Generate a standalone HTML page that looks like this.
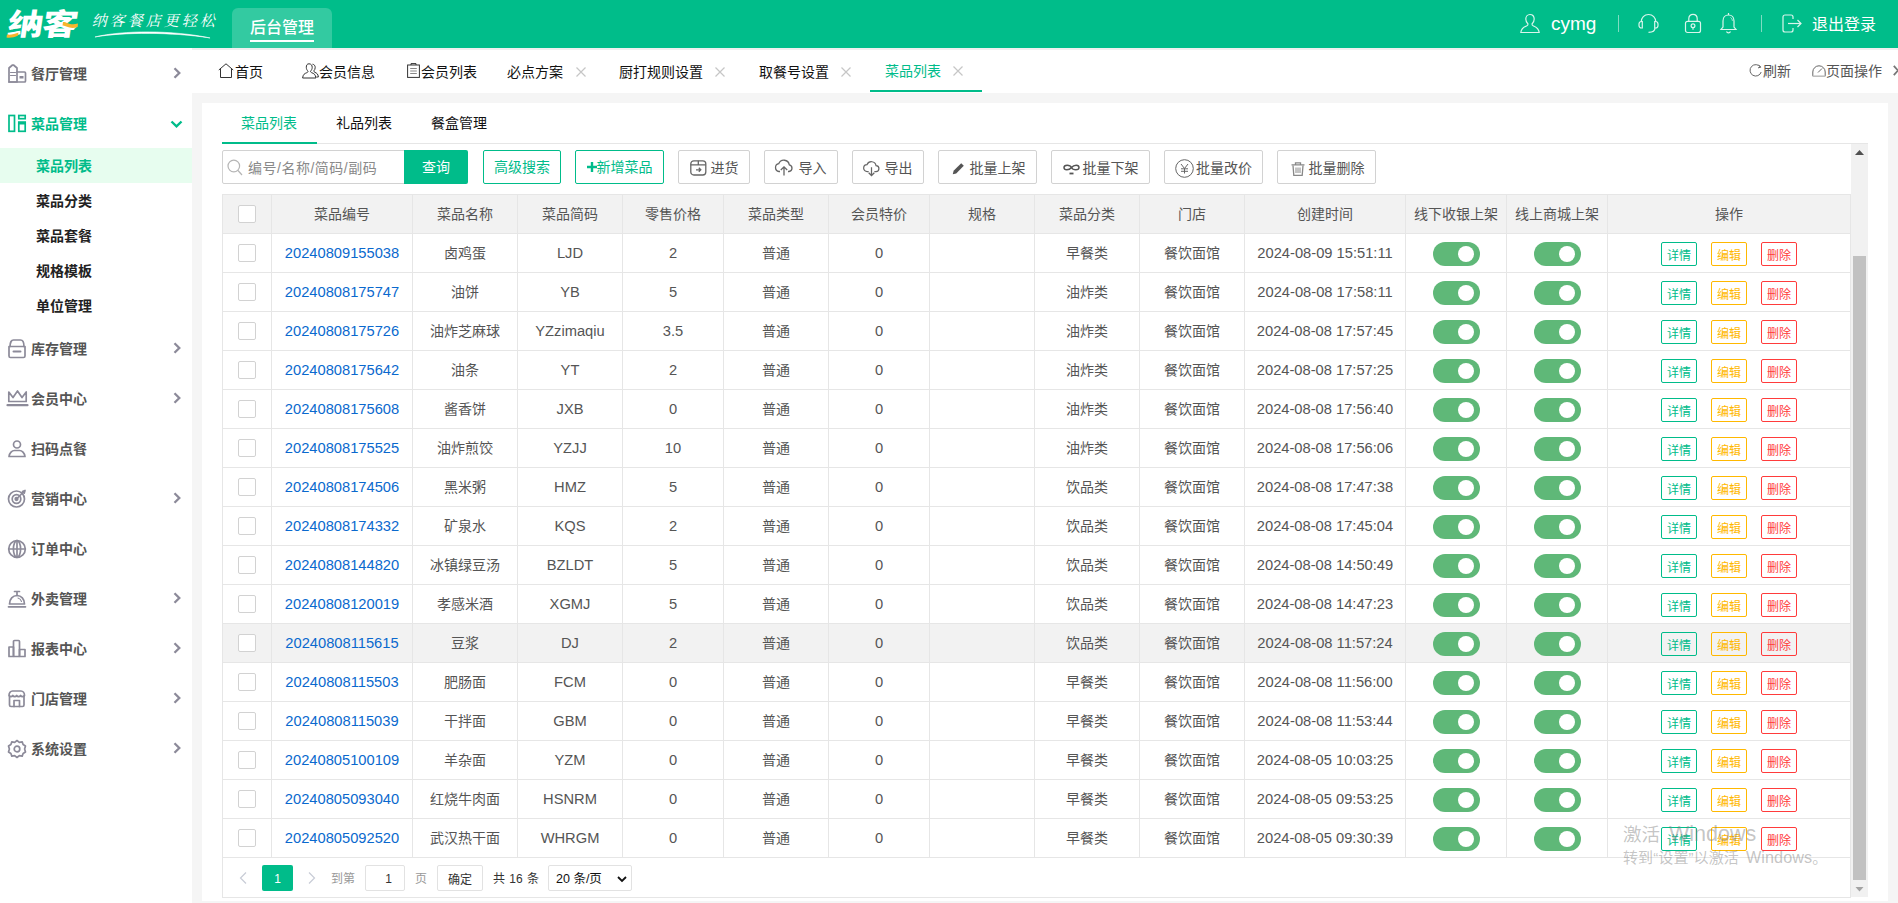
<!DOCTYPE html>
<html lang="zh-CN"><head><meta charset="utf-8"><title>菜品列表</title>
<style>
*{box-sizing:border-box;margin:0;padding:0}
html,body{width:1898px;height:903px;overflow:hidden;background:#f5f5f5}
body{font-family:"Liberation Sans","Noto Sans CJK SC",sans-serif;font-size:14px;color:#555;position:relative}
a{text-decoration:none;color:inherit}
i{font-style:normal}
.abs{position:absolute}
svg{display:block;overflow:visible}
/* header */
#hd{position:absolute;left:0;top:0;width:1898px;height:48px;background:#00bd8a;color:#fff}
#logo{position:absolute;left:8px;top:7px;font-size:30px;line-height:36px;font-weight:900;letter-spacing:-1px;transform-origin:0 50%;transform:scale(1.19,1) skewX(-7deg);color:#fff;white-space:nowrap}
#slogan{position:absolute;left:93px;top:10px;font-size:15px;line-height:22px;letter-spacing:3px;font-family:"Liberation Serif","Noto Serif CJK SC",serif;font-weight:400;transform:skewX(-14deg);white-space:nowrap}
#navtab{position:absolute;left:232px;top:8px;width:100px;height:40px;background:#33caa1;border-radius:6px 6px 0 0;font-size:16px;line-height:22px;text-align:center;padding-top:9px;letter-spacing:0}
#navtab b{font-weight:500;display:inline-block;border-bottom:2px solid #fff;padding-bottom:1px}
.hsep{position:absolute;top:15px;width:1px;height:17px;background:#7fdcc2}
.htxt{position:absolute;top:11px;line-height:24px;font-size:16px;white-space:nowrap}
/* sidebar */
#sb{position:absolute;left:0;top:48px;width:192px;height:855px;background:#fff}
.mi{position:absolute;left:0;width:192px;height:50px;line-height:52px;font-weight:700;color:#555;padding-left:31px}
.mi svg{position:absolute;left:8px;top:16px}
.mi .ar{position:absolute;left:173px;top:19px}
.mi.on{color:#00bc8a}
.smi{position:absolute;left:0;width:192px;height:35px;line-height:37px;font-weight:700;color:#222;padding-left:36px}
.smi.on{background:#e7fdef;color:#00bc8a}
/* tabs */
#tb{position:absolute;left:192px;top:48px;width:1706px;height:45px;background:#fff}
.tab{position:absolute;top:0;height:45px;line-height:48px;color:#111;white-space:nowrap}
.tab.on{color:#00bc8a}
.tab svg{position:absolute}
.x{position:absolute;top:18.500px;width:10px;height:10px}
/* panel */
#pn{position:absolute;left:202px;top:103px;width:1686px;height:798px;background:#fff}
.stab{position:absolute;top:103px;height:40px;line-height:40px;color:#111;white-space:nowrap}
.btn{position:absolute;top:150px;height:34px;line-height:34px;border:1px solid #d2d2d2;border-radius:2px;background:#fff;color:#555;white-space:nowrap;text-align:center}
.btn svg{position:absolute}
.btn.g{border-color:#00bc8a;color:#00bc8a;line-height:32px}
/* table */
table.grid{position:absolute;left:222px;top:194px;width:1628px;border-collapse:collapse;table-layout:fixed}
.grid th,.grid td{border:1px solid #e6e6e6;height:39px;text-align:center;font-weight:400;color:#555;padding:0;white-space:nowrap;line-height:20px}
.grid th{background:#f2f2f2;height:39px}
.grid tr.hov td{background:#f2f2f2}
.lnk{color:#0a69ce;font-size:14.7px}
.en{font-size:14.7px}
.cb{display:inline-block;width:18px;height:18px;border:1px solid #d2d2d2;border-radius:2px;background:#fff;vertical-align:middle;position:relative;top:-1px}
.sw{display:inline-block;margin-left:1px;width:47px;height:24px;border-radius:12px;background:#5fb878;position:relative;vertical-align:middle;top:1px}
.sw:after{content:"";position:absolute;left:25px;top:4px;width:16px;height:16px;border-radius:8px;background:#fff}
.ops a{display:inline-block;width:36px;height:24px;line-height:27px;border:1px solid;border-radius:2px;font-size:12px;margin:0 7px;vertical-align:middle;position:relative;top:1px}
.b1{color:#00bc8a;border-color:#00bc8a}
.b2{color:#ffb800;border-color:#ffb800}
.b3{color:#ff3b3b;border-color:#ff3b3b}

</style></head><body>
<div id="hd">
<div id="logo">纳客</div>
<svg class="abs" style="left:6px;top:8px" width="74" height="32" viewBox="0 0 74 32"><path d="M1 26.500C5 27 9 26 12.500 24.500L12 27.500C8.500 29.500 4 30 .5 29.500Z" fill="#f7b52c"/><path d="M57 14c3.500-.5 6.500 4 15 1.500l-.5 3.500c-8 3-11.500-2-15-1.500z" fill="#f7b52c"/></svg>
<div id="slogan">纳客餐店更轻松</div>
<svg class="abs" style="left:94px;top:31px" width="118" height="8" viewBox="0 0 120 8"><path d="M1 6 C30 -1 80 -1 118 7 C80 1 30 1 1 6 Z" fill="#fff" stroke="#fff" stroke-width=".6"/></svg>
<div id="navtab"><b>后台管理</b></div>
<svg class="abs" style="left:1520px;top:13px" width="20" height="21" viewBox="0 0 20 21" fill="none" stroke="#d9f5ec" stroke-width="1.2"><path d="M10 1.5c2.6 0 4.2 2 4.2 4.6 0 2-.9 3.800-2.200 4.800 0 1 .3 1.600 1.500 2.100 2.700 1.100 5.200 2.200 5.700 6.500H.8C1.300 15.200 3.800 14.100 6.500 13c1.200-.5 1.500-1.100 1.500-2.100C6.700 9.900 5.800 8.100 5.800 6.100 5.800 3.500 7.400 1.500 10 1.500z"/></svg>
<div class="htxt" style="left:1551px;top:11.5px;font-size:19px">cymg</div>
<div class="hsep" style="left:1618px"></div>
<svg class="abs" style="left:1638px;top:13px" width="21" height="21" viewBox="0 0 21 21" fill="none" stroke="#d9f5ec" stroke-width="1.200"><path d="M3.200 9C3.200 4.600 6.300 1.500 10.500 1.500S17.800 4.600 17.800 9"/><path d="M3.500 8.500h.8v6.500h-.8C2.100 15 1 13.900 1 12.500v-1.500C1 9.600 2.100 8.500 3.500 8.500z"/><path d="M17.500 8.500h-.8v6.500h.8c1.400 0 2.500-1.100 2.500-2.500v-1.500c0-1.400-1.100-2.500-2.500-2.500z"/><path d="M17 15c0 2.700-2.800 4.300-6.500 4.300"/></svg>
<svg class="abs" style="left:1684px;top:13px" width="18" height="21" viewBox="0 0 18 21" fill="none" stroke="#d9f5ec" stroke-width="1.200"><rect x="1.500" y="8.300" width="15" height="11.200" rx="2"/><path d="M4.800 8.300V5.500C4.800 3 6.500 1.300 9 1.300s4.200 1.700 4.200 4.200v2.800"/><circle cx="9" cy="12.800" r="1.900"/><path d="M9 14.700v2"/></svg>
<svg class="abs" style="left:1720px;top:12px" width="17" height="22" viewBox="0 0 17 22" fill="none" stroke="#d9f5ec" stroke-width="1.200"><path d="M8.500 3c3.400 0 5.500 2.600 5.500 6v6l2 2.500H1L3 15V9c0-3.400 2.100-6 5.500-6z"/><path d="M8.500 3V1"/><path d="M6.500 19.500c.4.900 1.100 1.300 2 1.300s1.600-.4 2-1.300"/><path d="M10.500 5.500c1.200.7 1.800 1.900 1.900 3.300" stroke-width=".8"/></svg>
<div class="hsep" style="left:1761px"></div>
<svg class="abs" style="left:1782px;top:14px" width="20" height="19" viewBox="0 0 20 19" fill="none" stroke="#d9f5ec" stroke-width="1.200"><path d="M11 5V3c0-1.100-.9-2-2-2H3C1.900 1 1 1.900 1 3v13c0 1.100.9 2 2 2h6c1.100 0 2-.9 2-2v-2"/><path d="M6 9.500h13"/><path d="M15.500 6l3.500 3.500-3.500 3.500"/></svg>
<div class="htxt" style="left:1812px;top:12.5px">退出登录</div>
</div>
<div id="sb">
<div class="mi" style="top:0px"><svg width="19" height="19" viewBox="0 0 19 19" fill="none" stroke="#8c8a99" stroke-width="1.700" stroke-linejoin="round" stroke-linecap="round"><path d="M1 18V4L4.500 1h1L9 4V18z"/><path d="M9 8h7.500c.6 0 1 .4 1 1V17c0 .6-.4 1-1 1H1"/><path d="M2.500 8.500h5M2.500 11.500h5" stroke-width="1.100"/><rect x="11.500" y="12" width="4" height="2.500" fill="#8c8a99" stroke="none"/></svg>餐厅管理<svg class="ar" width="8" height="12" viewBox="0 0 8 12" fill="none" stroke="#8c8a99" stroke-width="2.300"><path d="M1.500 1.200L6.300 6l-4.800 4.800"/></svg></div>
<div class="mi on" style="top:50px"><svg width="19" height="19" viewBox="0 0 19 19" fill="none" stroke="#00bc8a" stroke-width="1.700"><rect x="1" y="1.500" width="5.500" height="15.800"/><rect x="10.800" y="1.500" width="6.400" height="3.200"/><rect x="10.800" y="8.300" width="6.400" height="9"/><rect x="10" y="7.500" width="8" height="3" fill="#00bc8a" stroke="none"/></svg>菜品管理<svg class="ar" style="left:170px;top:22px" width="13" height="8" viewBox="0 0 13 8" fill="none" stroke="#00bc8a" stroke-width="2.400"><path d="M1.500 1.500L6.500 6.300l5-4.800"/></svg></div>
<div class="mi" style="top:275px"><svg width="19" height="19" viewBox="0 0 19 19" fill="none" stroke="#8c8a99" stroke-width="1.700" stroke-linejoin="round" stroke-linecap="round"><path d="M2 7.500C2 3.500 3.500 1 5.500 1h7C14.500 1 16 3.500 16 7.500"/><path d="M1 7.500h16v9.500c0 .8-.7 1.500-1.500 1.500h-13C1.700 18.500 1 17.800 1 17z"/><path d="M5.500 12.500h7" stroke-width="2"/></svg>库存管理<svg class="ar" width="8" height="12" viewBox="0 0 8 12" fill="none" stroke="#8c8a99" stroke-width="2.300"><path d="M1.500 1.200L6.300 6l-4.800 4.800"/></svg></div>
<div class="mi" style="top:325px"><svg width="19" height="19" viewBox="0 0 19 19" fill="none" stroke="#8c8a99" stroke-width="1.700" stroke-linejoin="round" stroke-linecap="round"><path d="M.8 12.500V3l4.200 5.500L9.500 2l4.500 6.500L18.200 3v9.500z"/><path d="M-.5 16.200h20" stroke-width="2.200"/></svg>会员中心<svg class="ar" width="8" height="12" viewBox="0 0 8 12" fill="none" stroke="#8c8a99" stroke-width="2.300"><path d="M1.500 1.200L6.300 6l-4.800 4.800"/></svg></div>
<div class="mi" style="top:375px"><svg width="19" height="19" viewBox="0 0 19 19" fill="none" stroke="#8c8a99" stroke-width="1.700" stroke-linejoin="round" stroke-linecap="round"><circle cx="9" cy="5.500" r="3.500"/><path d="M1 17.500c.5-3.500 3-6 5.500-6h5c2.500 0 5 2.500 5.500 6z"/></svg>扫码点餐</div>
<div class="mi" style="top:425px"><svg width="19" height="19" viewBox="0 0 19 19" fill="none" stroke="#8c8a99" stroke-width="1.700" stroke-linejoin="round" stroke-linecap="round"><circle cx="8.500" cy="10" r="8"/><circle cx="8.500" cy="10" r="4.300"/><circle cx="8.500" cy="10" r="1.300" fill="#8c8a99"/><path d="M8.500 10L16.500 2M14.500 2.500l2.500-1-.8 2.700"/></svg>营销中心<svg class="ar" width="8" height="12" viewBox="0 0 8 12" fill="none" stroke="#8c8a99" stroke-width="2.300"><path d="M1.500 1.200L6.300 6l-4.800 4.800"/></svg></div>
<div class="mi" style="top:475px"><svg width="19" height="19" viewBox="0 0 19 19" fill="none" stroke="#8c8a99" stroke-width="1.700" stroke-linejoin="round" stroke-linecap="round"><circle cx="9" cy="10" r="8.300"/><ellipse cx="9" cy="10" rx="3.600" ry="8.300"/><path d="M.7 10h16.600M9 1.700v16.600"/></svg>订单中心</div>
<div class="mi" style="top:525px"><svg width="19" height="19" viewBox="0 0 19 19" fill="none" stroke="#8c8a99" stroke-width="1.700" stroke-linejoin="round" stroke-linecap="round"><path d="M1.500 15c0-5 3.300-8.500 7.500-8.500s7.500 3.500 7.500 8.500z"/><path d="M.5 17.800h17"/><path d="M6.500 2.500h5M9 2.500v4"/><path d="M10 9c1.800.5 3 1.800 3.500 3.500" stroke-width="1.100"/></svg>外卖管理<svg class="ar" width="8" height="12" viewBox="0 0 8 12" fill="none" stroke="#8c8a99" stroke-width="2.300"><path d="M1.500 1.200L6.300 6l-4.800 4.800"/></svg></div>
<div class="mi" style="top:575px"><svg width="19" height="19" viewBox="0 0 19 19" fill="none" stroke="#8c8a99" stroke-width="1.700" stroke-linejoin="round" stroke-linecap="round"><rect x="1" y="8" width="4.500" height="9.500"/><rect x="5.500" y="1.500" width="6" height="16" rx="1"/><rect x="11.500" y="10.500" width="5.500" height="7"/></svg>报表中心<svg class="ar" width="8" height="12" viewBox="0 0 8 12" fill="none" stroke="#8c8a99" stroke-width="2.300"><path d="M1.500 1.200L6.300 6l-4.800 4.800"/></svg></div>
<div class="mi" style="top:625px"><svg width="19" height="19" viewBox="0 0 19 19" fill="none" stroke="#8c8a99" stroke-width="1.700" stroke-linejoin="round" stroke-linecap="round"><path d="M1.500 7v9c0 .8.700 1.500 1.500 1.500h11.500c.8 0 1.500-.7 1.500-1.500V7"/><path d="M1 6.500C1 4 2.500 2 4.500 2h8.500c2 0 3.500 2 3.500 4.500-1 1.600-3 1.600-3.900 0-.9 1.600-3 1.600-3.900 0-.9 1.600-3 1.600-3.900 0-.9 1.600-2.800 1.600-3.800 0z"/><path d="M6 17.500v-6h5.500v6"/></svg>门店管理<svg class="ar" width="8" height="12" viewBox="0 0 8 12" fill="none" stroke="#8c8a99" stroke-width="2.300"><path d="M1.500 1.200L6.300 6l-4.800 4.800"/></svg></div>
<div class="mi" style="top:675px"><svg width="19" height="19" viewBox="0 0 19 19" fill="none" stroke="#8c8a99" stroke-width="1.700" stroke-linejoin="round" stroke-linecap="round"><path d="M9 1l2.300 1.800 2.900-.4.900 2.600 2.400 1.500-.9 3 .9 3-2.400 1.500-.9 2.600-2.900-.4L9 18l-2.300-1.800-2.900.4-.9-2.600L.5 12.500l.9-3-.9-3 2.400-1.500.9-2.600 2.900.4z" transform="translate(0 .5)"/><circle cx="9" cy="10" r="2.800"/></svg>系统设置<svg class="ar" width="8" height="12" viewBox="0 0 8 12" fill="none" stroke="#8c8a99" stroke-width="2.300"><path d="M1.500 1.200L6.300 6l-4.800 4.800"/></svg></div>
<div class="smi on" style="top:100px">菜品列表</div>
<div class="smi" style="top:135px">菜品分类</div>
<div class="smi" style="top:170px">菜品套餐</div>
<div class="smi" style="top:205px">规格模板</div>
<div class="smi" style="top:240px">单位管理</div>
</div>
<div id="tb">
<div class="abs" style="left:0;top:0;width:1706px;height:2px;background:#f0f0f0"></div>
<svg class="abs" style="left:26px;top:15px" width="16" height="15" viewBox="0 0 16 15" fill="none" stroke="#333" stroke-width="1"><path d="M.8 7L8 .8 15.200 7"/><path d="M2.500 5.800V14.500h11V5.800"/></svg>
<div class="tab" style="left:43px">首页</div>
<svg class="abs" style="left:110px;top:15px" width="17" height="16" viewBox="0 0 17 16" fill="none" stroke="#333" stroke-width="1"><path d="M7 .8c2 0 3.200 1.500 3.200 3.500 0 1.600-.7 3-1.700 3.800 0 .8.200 1.200 1.200 1.600 2.100.8 3.800 1.600 4.200 5.300H.600c.4-3.700 2.100-4.500 4.200-5.300 1-.4 1.200-.8 1.200-1.600-1-.8-1.700-2.200-1.700-3.800C4.300 2.300 5 .8 7 .8z"/><path d="M10.500 1.200c1.800.2 2.700 1.600 2.700 3.300 0 1.400-.6 2.600-1.400 3.400 0 .7.300 1 1.100 1.400 1.800.8 3.200 1.700 3.500 4.700h-2"/></svg>
<div class="tab" style="left:127px">会员信息</div>
<svg class="abs" style="left:215px;top:15px" width="13" height="15" viewBox="0 0 13 15" fill="none" stroke="#333" stroke-width="1"><rect x=".6" y="2" width="11.800" height="12.400"/><path d="M4 2V.6h5V2" /><path d="M3.200 5.500h6.600M3.200 8h6.600M3.200 10.500h6.600" stroke="#888"/></svg>
<div class="tab" style="left:229px">会员列表</div>
<div class="tab" style="left:315px">必点方案</div>
<svg class="x" style="left:384px" viewBox="0 0 10 10" stroke="#c6c6c6" stroke-width="1.200"><path d="M.5.500l9 9M9.500.500l-9 9"/></svg>
<div class="tab" style="left:427px">厨打规则设置</div>
<svg class="x" style="left:523px" viewBox="0 0 10 10" stroke="#c6c6c6" stroke-width="1.200"><path d="M.5.500l9 9M9.500.500l-9 9"/></svg>
<div class="tab" style="left:567px">取餐号设置</div>
<svg class="x" style="left:649px" viewBox="0 0 10 10" stroke="#c6c6c6" stroke-width="1.200"><path d="M.5.500l9 9M9.500.500l-9 9"/></svg>
<div class="tab on" style="left:693px;top:-1px">菜品列表</div>
<svg class="x" style="left:761px;top:17.500px" viewBox="0 0 10 10" stroke="#c6c6c6" stroke-width="1.200"><path d="M.5.500l9 9M9.500.500l-9 9"/></svg>
<div class="abs" style="left:678px;top:42px;width:112px;height:2px;background:#00bc8a"></div>
<svg class="abs" style="left:1557px;top:16px" width="14" height="13" viewBox="0 0 14 13" fill="none" stroke="#666" stroke-width="1"><path d="M11.500 3.200A5.700 5.700 0 1 0 12.200 8"/><path d="M9.500.8l2.300 2.300-2.800.8"/></svg>
<div class="tab" style="left:1571px;color:#555;line-height:46px">刷新</div>
<svg class="abs" style="left:1620px;top:17px" width="14" height="12" viewBox="0 0 14 12" fill="none" stroke="#666" stroke-width="1"><path d="M.8 11V7A6.200 6.200 0 0 1 13.200 7v4"/><path d="M6 7.500L10 3.500"/><path d="M.5 11.200h13" stroke="#bbb" stroke-width="1.500"/></svg>
<div class="tab" style="left:1634px;color:#555;line-height:46px">页面操作</div>
<svg class="abs" style="left:1701px;top:17px" width="6" height="11" viewBox="0 0 6 11" fill="none" stroke="#777" stroke-width="1.800"><path d="M.8.800L5 5.500.8 10.200"/></svg>
</div>
<div id="pn"></div>
<div class="abs" style="left:222px;top:143px;width:1646px;height:1px;background:#e6e6e6"></div>
<div class="abs" style="left:222px;top:857px;width:1629px;height:41px;border:1px solid #e6e6e6"></div>
<div class="stab" style="left:241px;color:#00bc8a">菜品列表</div>
<div class="stab" style="left:336px">礼品列表</div>
<div class="stab" style="left:431px">餐盒管理</div>
<div class="abs" style="left:222px;top:142px;width:95px;height:2px;background:#00bc8a"></div>
<!-- scrollbar -->
<div class="abs" style="left:1851px;top:144px;width:17px;height:753px;background:#f1f1f1"></div>
<div class="abs" style="left:1853px;top:256px;width:13px;height:624px;background:#c1c1c1"></div>
<svg class="abs" style="left:1855px;top:150px" width="9" height="5" viewBox="0 0 9 5"><path d="M0 5L4.500 0 9 5z" fill="#505050"/></svg>
<svg class="abs" style="left:1855px;top:887px" width="9" height="5" viewBox="0 0 9 5"><path d="M.5 0L4.500 4.500 8.500 0z" fill="#a3a3a3"/></svg>
<!-- search -->
<div class="abs" style="left:222px;top:150px;width:183px;height:34px;border:1px solid #d2d2d2;border-radius:2px 0 0 2px;background:#fff"></div>
<svg class="abs" style="left:227px;top:159px" width="16" height="17" viewBox="0 0 16 17" fill="none" stroke="#b5b5b5" stroke-width="1.200"><circle cx="6.800" cy="7" r="5.800"/><path d="M11 11.500L15 16"/></svg>
<div class="abs" style="left:248px;top:150px;line-height:36px;color:#8a8a8a;white-space:nowrap;letter-spacing:.5px">编号/名称/简码/副码</div>
<div class="abs" style="left:404px;top:150px;width:64px;height:34px;line-height:35px;background:#00bc8a;color:#fff;text-align:center;border-radius:0 2px 2px 0">查询</div>
<div class="btn g" style="left:483px;width:78px">高级搜索</div>
<div class="btn g" style="left:575px;width:89px;padding-left:10px"><svg style="left:11px;top:11px" width="10" height="10" viewBox="0 0 10 10" stroke="#00bc8a" stroke-width="2.400"><path d="M0 5h10M5 0v10"/></svg>新增菜品</div>
<div class="btn" style="left:678px;width:72px;padding-left:21px"><svg style="left:11px;top:8px" width="17" height="17" viewBox="0 0 17 17" fill="none" stroke="#666" stroke-width="1.300"><rect x=".8" y="1.800" width="15" height="14.200" rx="3"/><path d="M.8 5.800h15M8.300 1.800v4"/><path d="M6 10.800h4.500M8.800 8.800l2 2-2 2"/></svg>进货</div>
<div class="btn" style="left:764px;width:74px;padding-left:23px"><svg style="left:9px;top:9px" width="20" height="16" viewBox="0 0 20 16" fill="none" stroke="#666" stroke-width="1.300"><path d="M6 11.500H5A4 4 0 0 1 4.800 3.600 5.500 5.500 0 0 1 15.300 4.800 3.400 3.400 0 0 1 15 11.500h-1"/><path d="M10 15.500V7M6.800 10L10 6.800 13.200 10"/></svg>导入</div>
<div class="btn" style="left:852px;width:72px;padding-left:21px"><svg style="left:10px;top:9.500px" width="17" height="15.500" viewBox="0 0 18 16" fill="none" stroke="#666" stroke-width="1.300"><path d="M6 11H4.500A3.700 3.700 0 0 1 4.300 3.600 5 5 0 0 1 13.800 4.600 3.200 3.200 0 0 1 13.500 11H12"/><path d="M9 6.500V15M6 12.200L9 15.200 12 12.200"/></svg>导出</div>
<div class="btn" style="left:938px;width:99px;padding-left:20px"><svg style="left:13px;top:11px" width="13" height="13" viewBox="0 0 13 13"><path d="M9.200 1.200l2.600 2.600L4.200 11.400 .8 12.200l.8-3.400z" fill="#555"/></svg>批量上架</div>
<div class="btn" style="left:1051px;width:99px;padding-left:20px"><svg style="left:11px;top:12px" width="17" height="12" viewBox="0 0 17 12" fill="none" stroke="#555" stroke-width="1.500"><path d="M8.500 4.500C7 1.500 1 1.500 1 4.500s5 3 7.500 0C11 1.500 16 1.500 16 4.500s-6 3-7.500 0"/><path d="M6.500 10.500h4" stroke-width="1.800"/></svg>批量下架</div>
<div class="btn" style="left:1164px;width:99px;padding-left:21px"><svg style="left:10px;top:7.500px" width="19" height="19" viewBox="0 0 19 19" fill="none" stroke="#666" stroke-width="1"><circle cx="9.500" cy="9.500" r="8.800"/><path d="M6 5l3.500 4.500L13 5M9.500 9.500v5M6 9.800h7M6 12.300h7"/></svg>批量改价</div>
<div class="btn" style="left:1277px;width:99px;padding-left:20px"><svg style="left:13px;top:11px" width="14" height="14" viewBox="0 0 14 14" fill="none" stroke="#888" stroke-width="1.300"><path d="M.5 2.800h13M4.500 2.500V.8h5v1.700"/><path d="M2 3.500l.8 9.800h8.400l.8-9.800"/><path d="M5 5.500v5.500M7 5.500v5.500M9 5.500v5.500" stroke-width="1"/></svg>批量删除</div>
<table class="grid"><colgroup><col style="width:49px"><col style="width:141px"><col style="width:105px"><col style="width:105px"><col style="width:101px"><col style="width:105px"><col style="width:101px"><col style="width:105px"><col style="width:105px"><col style="width:105px"><col style="width:161px"><col style="width:101px"><col style="width:101px"><col style="width:243px"></colgroup>
<thead><tr><th><i class="cb"></i></th><th>菜品编号</th><th>菜品名称</th><th>菜品简码</th><th>零售价格</th><th>菜品类型</th><th>会员特价</th><th>规格</th><th>菜品分类</th><th>门店</th><th>创建时间</th><th>线下收银上架</th><th>线上商城上架</th><th>操作</th></tr></thead>
<tbody>
<tr><td><i class="cb"></i></td><td><a class="lnk">20240809155038</a></td><td>卤鸡蛋</td><td class="en">LJD</td><td class="en">2</td><td>普通</td><td class="en">0</td><td></td><td>早餐类</td><td>餐饮面馆</td><td class="en">2024-08-09 15:51:11</td><td><i class="sw"></i></td><td><i class="sw"></i></td><td class="ops"><a class="b1">详情</a><a class="b2">编辑</a><a class="b3">删除</a></td></tr>
<tr><td><i class="cb"></i></td><td><a class="lnk">20240808175747</a></td><td>油饼</td><td class="en">YB</td><td class="en">5</td><td>普通</td><td class="en">0</td><td></td><td>油炸类</td><td>餐饮面馆</td><td class="en">2024-08-08 17:58:11</td><td><i class="sw"></i></td><td><i class="sw"></i></td><td class="ops"><a class="b1">详情</a><a class="b2">编辑</a><a class="b3">删除</a></td></tr>
<tr><td><i class="cb"></i></td><td><a class="lnk">20240808175726</a></td><td>油炸芝麻球</td><td class="en">YZzimaqiu</td><td class="en">3.5</td><td>普通</td><td class="en">0</td><td></td><td>油炸类</td><td>餐饮面馆</td><td class="en">2024-08-08 17:57:45</td><td><i class="sw"></i></td><td><i class="sw"></i></td><td class="ops"><a class="b1">详情</a><a class="b2">编辑</a><a class="b3">删除</a></td></tr>
<tr><td><i class="cb"></i></td><td><a class="lnk">20240808175642</a></td><td>油条</td><td class="en">YT</td><td class="en">2</td><td>普通</td><td class="en">0</td><td></td><td>油炸类</td><td>餐饮面馆</td><td class="en">2024-08-08 17:57:25</td><td><i class="sw"></i></td><td><i class="sw"></i></td><td class="ops"><a class="b1">详情</a><a class="b2">编辑</a><a class="b3">删除</a></td></tr>
<tr><td><i class="cb"></i></td><td><a class="lnk">20240808175608</a></td><td>酱香饼</td><td class="en">JXB</td><td class="en">0</td><td>普通</td><td class="en">0</td><td></td><td>油炸类</td><td>餐饮面馆</td><td class="en">2024-08-08 17:56:40</td><td><i class="sw"></i></td><td><i class="sw"></i></td><td class="ops"><a class="b1">详情</a><a class="b2">编辑</a><a class="b3">删除</a></td></tr>
<tr><td><i class="cb"></i></td><td><a class="lnk">20240808175525</a></td><td>油炸煎饺</td><td class="en">YZJJ</td><td class="en">10</td><td>普通</td><td class="en">0</td><td></td><td>油炸类</td><td>餐饮面馆</td><td class="en">2024-08-08 17:56:06</td><td><i class="sw"></i></td><td><i class="sw"></i></td><td class="ops"><a class="b1">详情</a><a class="b2">编辑</a><a class="b3">删除</a></td></tr>
<tr><td><i class="cb"></i></td><td><a class="lnk">20240808174506</a></td><td>黑米粥</td><td class="en">HMZ</td><td class="en">5</td><td>普通</td><td class="en">0</td><td></td><td>饮品类</td><td>餐饮面馆</td><td class="en">2024-08-08 17:47:38</td><td><i class="sw"></i></td><td><i class="sw"></i></td><td class="ops"><a class="b1">详情</a><a class="b2">编辑</a><a class="b3">删除</a></td></tr>
<tr><td><i class="cb"></i></td><td><a class="lnk">20240808174332</a></td><td>矿泉水</td><td class="en">KQS</td><td class="en">2</td><td>普通</td><td class="en">0</td><td></td><td>饮品类</td><td>餐饮面馆</td><td class="en">2024-08-08 17:45:04</td><td><i class="sw"></i></td><td><i class="sw"></i></td><td class="ops"><a class="b1">详情</a><a class="b2">编辑</a><a class="b3">删除</a></td></tr>
<tr><td><i class="cb"></i></td><td><a class="lnk">20240808144820</a></td><td>冰镇绿豆汤</td><td class="en">BZLDT</td><td class="en">5</td><td>普通</td><td class="en">0</td><td></td><td>饮品类</td><td>餐饮面馆</td><td class="en">2024-08-08 14:50:49</td><td><i class="sw"></i></td><td><i class="sw"></i></td><td class="ops"><a class="b1">详情</a><a class="b2">编辑</a><a class="b3">删除</a></td></tr>
<tr><td><i class="cb"></i></td><td><a class="lnk">20240808120019</a></td><td>孝感米酒</td><td class="en">XGMJ</td><td class="en">5</td><td>普通</td><td class="en">0</td><td></td><td>饮品类</td><td>餐饮面馆</td><td class="en">2024-08-08 14:47:23</td><td><i class="sw"></i></td><td><i class="sw"></i></td><td class="ops"><a class="b1">详情</a><a class="b2">编辑</a><a class="b3">删除</a></td></tr>
<tr class="hov"><td><i class="cb"></i></td><td><a class="lnk">20240808115615</a></td><td>豆浆</td><td class="en">DJ</td><td class="en">2</td><td>普通</td><td class="en">0</td><td></td><td>饮品类</td><td>餐饮面馆</td><td class="en">2024-08-08 11:57:24</td><td><i class="sw"></i></td><td><i class="sw"></i></td><td class="ops"><a class="b1">详情</a><a class="b2">编辑</a><a class="b3">删除</a></td></tr>
<tr><td><i class="cb"></i></td><td><a class="lnk">20240808115503</a></td><td>肥肠面</td><td class="en">FCM</td><td class="en">0</td><td>普通</td><td class="en">0</td><td></td><td>早餐类</td><td>餐饮面馆</td><td class="en">2024-08-08 11:56:00</td><td><i class="sw"></i></td><td><i class="sw"></i></td><td class="ops"><a class="b1">详情</a><a class="b2">编辑</a><a class="b3">删除</a></td></tr>
<tr><td><i class="cb"></i></td><td><a class="lnk">20240808115039</a></td><td>干拌面</td><td class="en">GBM</td><td class="en">0</td><td>普通</td><td class="en">0</td><td></td><td>早餐类</td><td>餐饮面馆</td><td class="en">2024-08-08 11:53:44</td><td><i class="sw"></i></td><td><i class="sw"></i></td><td class="ops"><a class="b1">详情</a><a class="b2">编辑</a><a class="b3">删除</a></td></tr>
<tr><td><i class="cb"></i></td><td><a class="lnk">20240805100109</a></td><td>羊杂面</td><td class="en">YZM</td><td class="en">0</td><td>普通</td><td class="en">0</td><td></td><td>早餐类</td><td>餐饮面馆</td><td class="en">2024-08-05 10:03:25</td><td><i class="sw"></i></td><td><i class="sw"></i></td><td class="ops"><a class="b1">详情</a><a class="b2">编辑</a><a class="b3">删除</a></td></tr>
<tr><td><i class="cb"></i></td><td><a class="lnk">20240805093040</a></td><td>红烧牛肉面</td><td class="en">HSNRM</td><td class="en">0</td><td>普通</td><td class="en">0</td><td></td><td>早餐类</td><td>餐饮面馆</td><td class="en">2024-08-05 09:53:25</td><td><i class="sw"></i></td><td><i class="sw"></i></td><td class="ops"><a class="b1">详情</a><a class="b2">编辑</a><a class="b3">删除</a></td></tr>
<tr><td><i class="cb"></i></td><td><a class="lnk">20240805092520</a></td><td>武汉热干面</td><td class="en">WHRGM</td><td class="en">0</td><td>普通</td><td class="en">0</td><td></td><td>早餐类</td><td>餐饮面馆</td><td class="en">2024-08-05 09:30:39</td><td><i class="sw"></i></td><td><i class="sw"></i></td><td class="ops"><a class="b1">详情</a><a class="b2">编辑</a><a class="b3">删除</a></td></tr>
</tbody></table>
<!-- pagination -->
<svg class="abs" style="left:239px;top:872px" width="8" height="12" viewBox="0 0 8 12" fill="none" stroke="#c8ccd6" stroke-width="1.200"><path d="M7 .5L1.500 6 7 11.500"/></svg>
<div class="abs" style="left:262px;top:865px;width:31px;height:26px;line-height:28px;background:#00bc8a;color:#fff;text-align:center;font-size:12px;border-radius:2px">1</div>
<svg class="abs" style="left:308px;top:872px" width="8" height="12" viewBox="0 0 8 12" fill="none" stroke="#c8ccd6" stroke-width="1.200"><path d="M1 .5L6.500 6 1 11.500"/></svg>
<div class="abs" style="left:331px;top:865px;line-height:29px;font-size:12px;color:#999">到第</div>
<div class="abs" style="left:365px;top:865px;width:40px;height:26px;line-height:27px;border:1px solid #e2e2e2;border-radius:2px;text-align:center;font-size:12px;color:#333;padding-left:7px">1</div>
<div class="abs" style="left:415px;top:865px;line-height:29px;font-size:12px;color:#999">页</div>
<div class="abs" style="left:437px;top:865px;width:46px;height:26px;line-height:29px;border:1px solid #e2e2e2;border-radius:2px;text-align:center;font-size:12px;color:#333">确定</div>
<div class="abs" style="left:493px;top:865px;line-height:29px;font-size:12px;color:#333;white-space:nowrap;word-spacing:1px">共 16 条</div>
<div class="abs" style="left:548px;top:865px;width:84px;height:26px;line-height:27px;border:1px solid #e2e2e2;border-radius:2px;font-size:12.500px;color:#111;padding-left:7px;white-space:nowrap">20 条/页<svg class="abs" style="left:68px;top:9.500px" width="10" height="7" viewBox="0 0 10 7" fill="none" stroke="#111" stroke-width="1.800"><path d="M1 1l4 4 4-4"/></svg></div>
<!-- watermark -->
<div class="abs" style="left:1623px;top:820px;font-size:18.500px;line-height:28px;color:rgba(125,125,125,.46);white-space:nowrap">激活<span style="font-size:21.500px;margin-left:9px">Windows</span></div>
<div class="abs" style="left:1623px;top:847px;font-size:15px;line-height:20px;color:rgba(125,125,125,.46);white-space:nowrap;letter-spacing:.1px">转到“设置”以激活<span style="font-size:16.200px;margin-left:7px">Windows</span>。</div>
</body></html>
